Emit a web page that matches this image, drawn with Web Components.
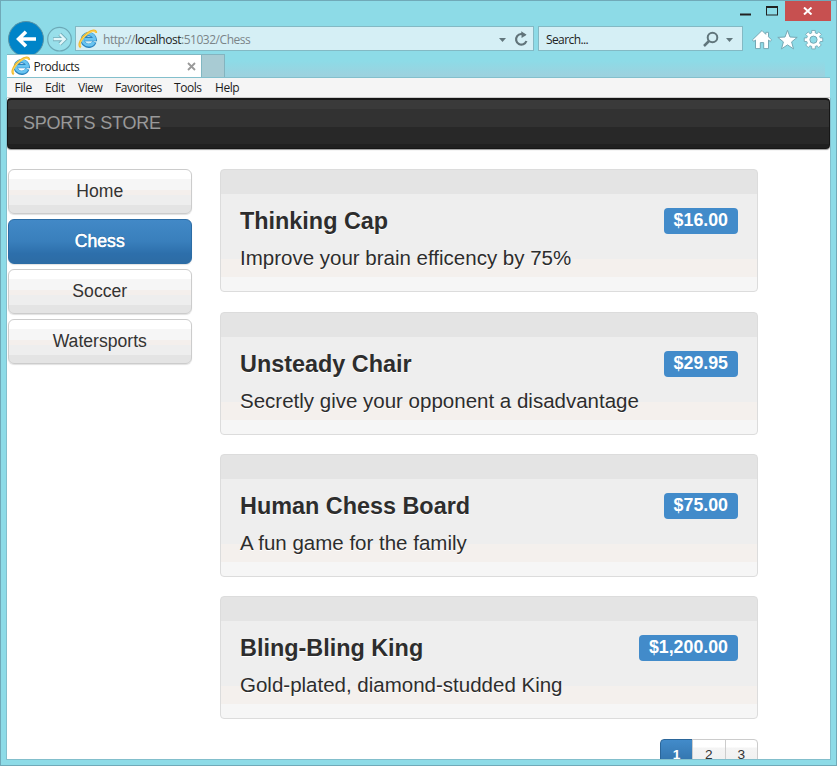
<!DOCTYPE html>
<html lang="en">
<head>
<meta charset="utf-8">
<title>Products</title>
<style>
html,body{margin:0;height:100%;overflow:hidden;font-family:"Liberation Sans",Arial,sans-serif;color:#2d2d2d}
</style>
</head>
<body>
<browser-window>
  <window-controls slot="top"></window-controls>
  <address-row slot="top"></address-row>
  <tab-strip slot="top">Products</tab-strip>
  <menu-bar slot="top"></menu-bar>
  <store-header>SPORTS STORE</store-header>
  <store-layout>
    <category-button slot="side">Home</category-button>
    <category-button slot="side" active>Chess</category-button>
    <category-button slot="side">Soccer</category-button>
    <category-button slot="side">Watersports</category-button>
    <product-card price="$16.00">Thinking Cap<span slot="desc">Improve your brain efficency by 75%</span></product-card>
    <product-card price="$29.95">Unsteady Chair<span slot="desc">Secretly give your opponent a disadvantage</span></product-card>
    <product-card price="$75.00">Human Chess Board<span slot="desc">A fun game for the family</span></product-card>
    <product-card price="$1,200.00">Bling-Bling King<span slot="desc">Gold-plated, diamond-studded King</span></product-card>
    <page-links></page-links>
  </store-layout>
</browser-window>
<script>
const define = (name, html, setup) => customElements.define(name, class extends HTMLElement {
  constructor() {
    super();
    const t = document.createElement('template');
    t.innerHTML = html;
    this.attachShadow({mode: 'open'}).append(t.content.cloneNode(true));
    if (setup) setup(this, this.shadowRoot);
  }
});

define('browser-window', `<style>
:host{display:flex;flex-direction:column;box-sizing:border-box;width:837px;height:766px;border:1px solid #70a9b8;background:#8ddbe7}
.page{flex:1;min-height:0;margin:0 6px 5px;overflow:hidden;background:#fff;border:solid #83bfcc;border-width:0 0 1px;box-shadow:1px 0 #83bfcc,-1px 0 #83bfcc}
</style><slot name="top"></slot><div class="page"><slot></slot></div>`);

define('window-controls', `<style>
:host{display:flex;justify-content:flex-end;height:21px;padding-right:5px}
.close{width:46px;height:20px;background:#c75050;display:grid;place-items:center}
svg{display:block}
</style><svg width="50" height="20"><path d="M5 13.5h11" stroke="#222" stroke-width="2"/><rect x="31.5" y="6" width="11" height="8" fill="none" stroke="#222"/><path d="M31 6h12" stroke="#222" stroke-width="2"/></svg>
<div class="close"><svg width="10" height="8" viewBox="0 0 10 8"><path d="M1 .5 8.5 7.5M8.5 .5 1 7.5" stroke="#fff" stroke-width="2"/></svg></div>`);

define('ie-logo', `<style>:host{display:block;width:18px;height:18px}svg{display:block;overflow:visible}</style>
<svg width="18" height="18" viewBox="0 0 18 18">
<path d="M15.4 12A6 5.8 0 1 1 15.7 9.2H5.5" fill="none" stroke="#2c83bd" stroke-width="4.2"/>
<path d="M15 12A5.9 5.7 0 1 1 15.6 9.3H5.5" fill="none" stroke="#68c4f1" stroke-width="2.8"/>
<path d="M1.8 17.2C-1.6 15 2.8 7 8.6 3.2 12.8 .3 17.2-.6 17 3" fill="none" stroke="#f2b92c" stroke-width="2.3"/>
<path d="M1.5 16.4C-.3 13.8 3.6 7.1 8.8 3.6 13 .9 16.4 .2 16.8 2.6" fill="none" stroke="#ffdc67" stroke-width="1"/>
</svg>`);

define('address-row', `<style>
:host{display:flex;height:32px;padding:0 6px 0 7px;font:12px "Open Sans","Noto Sans",sans-serif}
.nav{width:67px;flex:none;display:block;overflow:visible}
.box{box-sizing:border-box;height:25px;margin-top:4px;border:1px solid #83b9c4;background:#d5eff5;display:flex;align-items:center;color:#222}
.url{width:459px;padding-left:3px;color:#7b8488}
.url b{font-weight:400;color:#222}
.url span{margin:2px 0 0 6px;flex:1;font-size:12px;letter-spacing:-.47px}
.search{width:205px;margin-left:4px;padding-left:7px}
.search span{margin-top:2px;flex:1;font-size:12px;letter-spacing:-.6px}
.tools{margin:7px 0 0 8px}
</style>
<svg class="nav" width="67" height="32"><circle cx="18" cy="17" r="17.5" fill="#0084c8" stroke="#5993a5"/><path d="M28 17H11M18 9.8 10.6 17l7.4 7.2" fill="none" stroke="#fff" stroke-width="3.6"/>
<circle cx="51.5" cy="17.2" r="11.8" fill="#98dfea" stroke="#6ca9b7" stroke-width="1.2"/><path d="M45 17.2h11.5M51.8 12.2l5 5-5 5" fill="none" stroke="#74afbc" stroke-width="4"/><path d="M45.5 17.2h10.5M51.8 12.2l5 5-5 5" fill="none" stroke="#e1f6f9" stroke-width="2.2"/></svg>
<div class="box url"><ie-logo></ie-logo><span>http://<b>localhost</b>:51032/Chess</span><svg width="38" height="22"><path d="M4 10h7l-3.5 4z" fill="#62777d"/><path d="M30.2 7.6A5.3 5.3 0 1 0 31.4 13" fill="none" stroke="#61747a" stroke-width="2.2"/><path d="M26.2 3.2 31.6 6.8 26.6 10z" fill="#61747a"/></svg></div>
<div class="box search"><span>Search...</span><svg width="40" height="22"><circle cx="10.5" cy="9.5" r="4.8" fill="none" stroke="#60757b" stroke-width="2"/><path d="M7 13 2 18" stroke="#60757b" stroke-width="2.5"/><path d="M24 10h7l-3.5 4z" fill="#62777d"/></svg></div>
<svg class="tools" width="76" height="22"><g fill="#fff" stroke="#75a8b4" stroke-width="1" stroke-linejoin="round"><path d="M11 1.5 1.5 10.8l1.2 1.7 1.8-1.5v8.6h4.8v-6h3.4v6h4.8V11l1.8 1.5 1.2-1.7-3-3V3.3h-2.7v2z"/><path d="m36.5 1.3 2.5 6.7 7.2.4-5.6 4.5 1.9 7-6-4-6 4 1.9-7-5.6-4.5 7.2-.4z"/></g>
<g id="gear"></g><circle cx="62.5" cy="10.7" r="3.6" fill="#8ddbe7" stroke="#75a8b4"/></svg>`,
(el, r) => {
  const pts = [];
  for (let i = 0; i < 8; i++) for (const [a, rad] of [[-15, 7], [-11, 9.4], [11, 9.4], [15, 7]]) {
    const t = (i * 45 + a) * Math.PI / 180;
    pts.push((62.5 + rad * Math.cos(t)).toFixed(2) + ',' + (10.7 + rad * Math.sin(t)).toFixed(2));
  }
  r.querySelector('#gear').innerHTML = `<polygon points="${pts.join(' ')}" fill="#fff" stroke="#75a8b4" stroke-width=".9"/>`;
});

define('tab-strip', `<style>
:host{display:flex;height:23px;padding:0 6px;font:12px "Open Sans","Noto Sans",sans-serif;color:#222;background:linear-gradient(#8ddbe700 30%,#9bd2df 90%) 190px 0/634px 100% no-repeat}
.tab{box-sizing:border-box;width:195px;background:#fff;border:solid #81b7c2;border-width:1px 1px 0 0;display:flex;align-items:center;padding:0 5px}
.tab span{flex:1;font-size:12px;letter-spacing:-.5px;margin-left:3.5px}
.new{box-sizing:border-box;width:23px;background:#a8cbd3;border:solid #83b4bf;border-width:1px 1px 0 0}
</style><div class="tab"><ie-logo></ie-logo><span><slot></slot></span><svg width="9" height="9"><path d="M1 1l7 7M8 1 1 8" stroke="#999" stroke-width="1.8"/></svg></div><div class="new"></div>`);

define('menu-bar', `<style>
:host{box-sizing:border-box;display:flex;height:21px;margin:0 6px;padding:1px 7.5px 0;background:#f5f5f5;border-top:1px solid #83bfcc;border-bottom:1px solid #ccc;align-items:center;font:12px/18px "Open Sans","Noto Sans",sans-serif;color:#1c1c1c;letter-spacing:-.45px}
span{white-space:nowrap;flex:none}
</style><span style="width:30.5px">File</span><span style="width:33px">Edit</span><span style="width:37px">View</span><span style="width:59px">Favorites</span><span style="width:41px">Tools</span><span>Help</span>`);

define('store-header', `<style>
:host{box-sizing:border-box;display:block;height:51px;border:1px solid #161616;border-top-width:2px;border-radius:4px;background:linear-gradient(#3a3a3a 9px,#323232 9px 27px,#282828 27px 44px,#202020 44px);box-shadow:0 1px 1px #999;padding:0 15px;font-size:18px;line-height:47px;color:#999;letter-spacing:-.22px}
</style><slot></slot>`);

define('store-layout', `<style>
:host{display:flex;padding:20.4px 0 0 1px}
.side{width:183.5px;flex:none;display:flex;flex-direction:column;gap:4.8px}
.main{width:538px;margin-left:28.5px;display:flex;flex-direction:column;gap:19.3px}
</style><div class="side"><slot name="side"></slot></div><div class="main"><slot></slot></div>`);

define('category-button', `<style>
:host{box-sizing:border-box;display:block;height:45px;border:1px solid #ccc;border-radius:6px;text-align:center;font-size:17.6px;line-height:42px;color:#333;background:linear-gradient(#fff 9px,#f6f6f6 9px 20px,#f4efec 20px 25px,#eee 25px 35px,#e4e4e4 35px);box-shadow:0 1px 1px #e2e2e2}
:host([active]){color:#fff;border-color:#2b6ca5;text-shadow:0 0 .6px #fff,0 -1px #2d6da4;-webkit-text-stroke:.3px #fff;background:linear-gradient(#4289c7,#397fbc 50%,#2d6fab 78%,#2d6ca5)}
</style><slot></slot>`);

define('product-card', `<style>
:host{box-sizing:border-box;display:block;height:123px;flex:none;border:1px solid #dcdcdc;border-radius:4px;padding:34px 19px 0;background:linear-gradient(#e4e4e4 24px,#eee 24px 89px,#f4f0ed 89px 107px,#f6f6f6 107px);text-shadow:0 1px #fff}
.head{display:flex;justify-content:space-between;align-items:flex-start}
h3{margin:4px 0 0;font-size:23.4px;line-height:27px}
.price{background:#428bca;color:#fff;font-weight:700;font-size:17.8px;line-height:24px;height:26px;border-radius:4px;padding:0 10px;margin-top:4px;text-shadow:none}
.desc{font-size:20.5px;line-height:24px;margin-top:11px;white-space:nowrap}
</style><div class="head"><h3><slot></slot></h3><div class="price"></div></div><div class="desc"><slot name="desc"></slot></div>`,
(el, r) => { r.querySelector('.price').textContent = el.getAttribute('price'); });

define('page-links', `<style>
:host{display:flex;justify-content:flex-end;font-size:13.7px;line-height:30px;text-align:center;color:#333}
span{box-sizing:border-box;width:33.4px;height:32px;border:1px solid #ccc;margin-left:-1px;background:linear-gradient(#fff 7px,#f4f4f4 8px,#eee)}
.on{background:linear-gradient(#428bca,#2d6ca2);color:#fff;border-color:#2b669a;border-radius:4px 0 0 4px;font-weight:700}
span:last-child{border-radius:0 4px 4px 0}
</style><span class="on">1</span><span>2</span><span>3</span>`);
</script>
</body>
</html>
